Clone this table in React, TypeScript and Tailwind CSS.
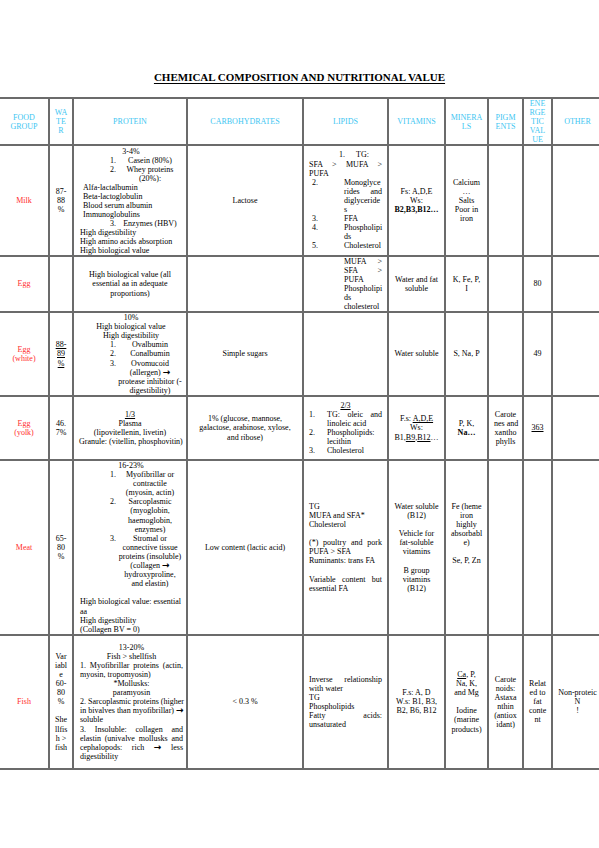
import type { ReactNode } from "react";

const cell = "border-2 border-[#6b6b6b] px-[5px] py-0 align-middle";
const head = "border-2 border-[#6b6b6b] px-0 py-0 text-center align-middle leading-[9px] text-[#3ec6f2]";
const food = `${cell} text-center text-[#ff2d2d]`;

function J({ children }: { children: ReactNode }) {
  return <div className="text-justify [text-align-last:justify]">{children}</div>;
}

function Arrow() {
  return <span className="font-['DejaVu_Sans',sans-serif] text-[9px] font-bold leading-[8px]">→</span>;
}

function Item({ n, children }: { n: string; children: ReactNode }) {
  return (
    <div className="ml-[30px] flex">
      <span className="w-[8px] shrink-0">{n}</span>
      <div className="flex-1 text-center">{children}</div>
    </div>
  );
}

function Num({ n, w, children }: { n: string; w: string; children: ReactNode }) {
  return (
    <div className="flex">
      <span className={`${w} shrink-0`}>{n}</span>
      <div className="flex-1">{children}</div>
    </div>
  );
}

function Lines({ items }: { items: ReactNode[] }) {
  return (
    <div className="text-center">
      {items.map((t, i) => (
        <div key={i}>{t === "" ? "\u00a0" : t}</div>
      ))}
    </div>
  );
}

export default function App() {
  return (
    <div className="min-h-[848px] w-[599px] overflow-hidden whitespace-nowrap bg-white pt-[71px] font-['Liberation_Serif',serif] text-[8px] leading-[9.1px] text-black">
      <h1 className="text-center text-[11px] font-bold leading-[13px] underline underline-offset-2">
        CHEMICAL COMPOSITION AND NUTRITIONAL VALUE
      </h1>

      <table className="-ml-[2px] mt-[13px] w-[604px] table-fixed border-collapse">
        <colgroup>
          <col className="w-[50px]" />
          <col className="w-[24px]" />
          <col className="w-[114px]" />
          <col className="w-[116px]" />
          <col className="w-[85px]" />
          <col className="w-[57px]" />
          <col className="w-[43px]" />
          <col className="w-[35px]" />
          <col className="w-[29px]" />
          <col className="w-[51px]" />
        </colgroup>
        <tbody>
          <tr className="h-[45px]">
            <td className={head}><Lines items={["FOOD", "GROUP"]} /></td>
            <td className={head}><Lines items={["WA", "TE", "R"]} /></td>
            <td className={head}>PROTEIN</td>
            <td className={head}>CARBOHYDRATES</td>
            <td className={head}>LIPIDS</td>
            <td className={head}>VITAMINS</td>
            <td className={head}><Lines items={["MINERA", "LS"]} /></td>
            <td className={head}><Lines items={["PIGM", "ENTS"]} /></td>
            <td className={head}><Lines items={["ENE", "RGE", "TIC", "VAL", "UE"]} /></td>
            <td className={head}>OTHER</td>
          </tr>

          {/* Milk */}
          <tr className="h-[111px]">
            <td className={food}>Milk</td>
            <td className={`${cell} px-0`}><Lines items={["87-", "88", "%"]} /></td>
            <td className={`${cell} pl-[6px] pr-[4px] leading-[9px]`}>
              <div className="text-center">3-4%</div>
              <Item n="1.">Casein (80%)</Item>
              <Item n="2.">
                <div>Whey proteins</div>
                <div>(20%):</div>
              </Item>
              <div className="pl-[3px]">
                <div>Alfa-lactalbumin</div>
                <div>Beta-lactoglobulin</div>
                <div>Blood serum albumin</div>
                <div>Immunoglobulins</div>
              </div>
              <Item n="3.">Enzymes (HBV)</Item>
              <div>High digestibility</div>
              <div>High amino acids absorption</div>
              <div>High biological value</div>
            </td>
            <td className={`${cell} text-center`}>Lactose</td>
            <td className={cell}>
              <div className="pl-[30px]">
                1.<span className="ml-[11px]">TG:</span>
              </div>
              <J>SFA &gt; MUFA &gt;</J>
              <div>PUFA</div>
              <Num n="2." w="w-[35px] pl-[3px]">
                <div>Monoglyce</div>
                <J>rides and</J>
                <div>diglyceride</div>
                <div>s</div>
              </Num>
              <Num n="3." w="w-[35px] pl-[3px]">FFA</Num>
              <Num n="4." w="w-[35px] pl-[3px]">
                <div>Phospholipi</div>
                <div>ds</div>
              </Num>
              <Num n="5." w="w-[35px] pl-[3px]">Cholesterol</Num>
            </td>
            <td className={`${cell} px-[2px]`}>
              <Lines items={["Fs: A,D,E", "Ws:", <b key="b">B2,B3,B12…</b>]} />
            </td>
            <td className={`${cell} px-[2px]`}>
              <Lines items={["Calcium", "…", "Salts", "Poor in", "iron"]} />
            </td>
            <td className={cell}></td>
            <td className={cell}></td>
            <td className={cell}></td>
          </tr>

          {/* Egg */}
          <tr className="h-[55px]">
            <td className={food}>Egg</td>
            <td className={cell}></td>
            <td className={`${cell} text-center`}>
              <div>High biological value (all</div>
              <div>essential aa in adequate</div>
              <div>proportions)</div>
            </td>
            <td className={cell}></td>
            <td className={`${cell} leading-[9px]`}>
              <div className="pl-[35px]">
                <J>MUFA &gt;</J>
                <J>SFA &gt;</J>
                <div>PUFA</div>
                <div>Phospholipi</div>
                <div>ds</div>
                <div>cholesterol</div>
              </div>
            </td>
            <td className={`${cell} px-[2px]`}>
              <Lines items={["Water and fat", "soluble"]} />
            </td>
            <td className={`${cell} px-[2px]`}>
              <Lines items={["K, Fe, P,", "I"]} />
            </td>
            <td className={cell}></td>
            <td className={`${cell} px-0 text-center`}>80</td>
            <td className={cell}></td>
          </tr>

          {/* Egg white */}
          <tr className="h-[84px]">
            <td className={food}><Lines items={["Egg", "(white)"]} /></td>
            <td className={`${cell} px-0 underline`}><Lines items={["88-", "89", "%"]} /></td>
            <td className={`${cell} pl-[6px] pr-[4px]`}>
              <div className="text-center">10%</div>
              <div className="text-center">High biological value</div>
              <div className="text-center">High digestibility</div>
              <Item n="1.">Ovalbumin</Item>
              <Item n="2.">Conalbumin</Item>
              <Item n="3.">
                <div>Ovomucoid</div>
                <div>
                  (allergen) <Arrow />
                </div>
                <div>protease inhibitor (-</div>
                <div>digestibility)</div>
              </Item>
            </td>
            <td className={`${cell} text-center`}>Simple sugars</td>
            <td className={cell}></td>
            <td className={`${cell} px-[2px] text-center`}>Water soluble</td>
            <td className={`${cell} px-[2px] text-center`}>S, Na, P</td>
            <td className={cell}></td>
            <td className={`${cell} px-0 text-center`}>49</td>
            <td className={cell}></td>
          </tr>

          {/* Egg yolk */}
          <tr className="h-[64px]">
            <td className={food}><Lines items={["Egg", "(yolk)"]} /></td>
            <td className={`${cell} px-0`}><Lines items={["46.", "7%"]} /></td>
            <td className={`${cell} px-[3px]`}>
              <Lines
                items={[
                  <span key="u" className="underline">1/3</span>,
                  "Plasma",
                  "(lipovitellenin, livetin)",
                  "Granule: (vitellin, phosphovitin)",
                ]}
              />
            </td>
            <td className={`${cell} text-center`}>
              <div>1% (glucose, mannose,</div>
              <div>galactose, arabinose, xylose,</div>
              <div>and ribose)</div>
            </td>
            <td className={cell}>
              <div className="text-center underline">2/3</div>
              <Num n="1." w="w-[18px]">
                <J>TG: oleic and</J>
                <div>linoleic acid</div>
              </Num>
              <Num n="2." w="w-[18px]">
                <div>Phospholipids:</div>
                <div>lecithin</div>
              </Num>
              <Num n="3." w="w-[18px]">Cholesterol</Num>
            </td>
            <td className={`${cell} px-[2px]`}>
              <Lines
                items={[
                  <span key="a">
                    F.s: <span className="underline">A,D,E</span>
                  </span>,
                  "Ws:",
                  <span key="b">
                    B1,<span className="underline">B9</span>,<span className="underline">B12</span>…
                  </span>,
                ]}
              />
            </td>
            <td className={`${cell} px-[2px]`}>
              <Lines items={["P, K,", <b key="n">Na…</b>]} />
            </td>
            <td className={`${cell} px-0`}>
              <Lines items={["Carote", "nes and", "xantho", "phylls"]} />
            </td>
            <td className={`${cell} px-0 text-center underline`}>363</td>
            <td className={cell}></td>
          </tr>

          {/* Meat */}
          <tr className="h-[173px]">
            <td className={food}>Meat</td>
            <td className={`${cell} px-0`}><Lines items={["65-", "80", "%"]} /></td>
            <td className={`${cell} pl-[6px] pr-[4px]`}>
              <div className="text-center">16-23%</div>
              <Item n="1.">
                <div>Myofibrillar or</div>
                <div>contractile</div>
                <div>(myosin, actin)</div>
              </Item>
              <Item n="2.">
                <div>Sarcoplasmic</div>
                <div>(myoglobin,</div>
                <div>haemoglobin,</div>
                <div>enzymes)</div>
              </Item>
              <Item n="3.">
                <div>Stromal or</div>
                <div>connective tissue</div>
                <div>proteins (insoluble)</div>
                <div>
                  (collagen <Arrow />
                </div>
                <div>hydroxyproline,</div>
                <div>and elastin)</div>
              </Item>
              <div>&nbsp;</div>
              <div>High biological value: essential</div>
              <div>aa</div>
              <div>High digestibility</div>
              <div>(Collagen BV = 0)</div>
            </td>
            <td className={`${cell} text-center`}>Low content (lactic acid)</td>
            <td className={cell}>
              <div>TG</div>
              <div>MUFA and SFA*</div>
              <div>Cholesterol</div>
              <div>&nbsp;</div>
              <J>(*) poultry and pork</J>
              <div>PUFA &gt; SFA</div>
              <div>Ruminants: trans FA</div>
              <div>&nbsp;</div>
              <J>Variable content but</J>
              <div>essential FA</div>
            </td>
            <td className={`${cell} px-[2px]`}>
              <Lines
                items={[
                  "Water soluble",
                  "(B12)",
                  "",
                  "Vehicle for",
                  "fat-soluble",
                  "vitamins",
                  "",
                  "B group",
                  "vitamins",
                  "(B12)",
                ]}
              />
            </td>
            <td className={`${cell} px-[2px]`}>
              <Lines
                items={["Fe (heme", "iron", "highly", "absorbabl", "e)", "", "Se, P, Zn", "", "", ""]}
              />
            </td>
            <td className={cell}></td>
            <td className={cell}></td>
            <td className={cell}></td>
          </tr>

          {/* Fish */}
          <tr className="h-[134px]">
            <td className={food}>Fish</td>
            <td className={`${cell} px-0`}>
              <Lines
                items={["Var", "iabl", "e", "60-", "80", "%", "", "She", "llfis", "h >", "fish"]}
              />
            </td>
            <td className={`${cell} pl-[6px] pr-[3px]`}>
              <div className="text-center">13-20%</div>
              <div className="text-center">Fish &gt; shellfish</div>
              <J>1. Myofibrillar proteins (actin,</J>
              <div>myosin, tropomyosin)</div>
              <div className="text-center">*Mollusks:</div>
              <div className="text-center">paramyosin</div>
              <div>2. Sarcoplasmic proteins (higher</div>
              <J>
                in bivalves than myofibrillar) <Arrow />
              </J>
              <div>soluble</div>
              <J>3. Insoluble: collagen and</J>
              <J>elastin (univalve mollusks and</J>
              <J>
                cephalopods: rich <Arrow /> less
              </J>
              <div>digestibility</div>
            </td>
            <td className={`${cell} text-center`}>&lt; 0.3 %</td>
            <td className={cell}>
              <J>Inverse relationship</J>
              <div>with water</div>
              <div>TG</div>
              <div>Phospholipids</div>
              <J>Fatty acids:</J>
              <div>unsaturated</div>
            </td>
            <td className={`${cell} px-[2px]`}>
              <Lines items={["F.s: A, D", "W.s: B1, B3,", "B2, B6, B12"]} />
            </td>
            <td className={`${cell} px-[2px]`}>
              <Lines
                items={[
                  <span key="c">
                    <span className="underline">Ca</span>, P,
                  </span>,
                  "Na, K,",
                  "and Mg",
                  "",
                  "Iodine",
                  "(marine",
                  "products)",
                ]}
              />
            </td>
            <td className={`${cell} px-0`}>
              <Lines items={["Carote", "noids:", "Astaxa", "nthin", "(antiox", "idant)"]} />
            </td>
            <td className={`${cell} px-0`}>
              <Lines items={["Relat", "ed to", "fat", "conte", "nt"]} />
            </td>
            <td className={`${cell} px-0`}>
              <Lines items={["Non-proteic", "N", "!"]} />
            </td>
          </tr>
        </tbody>
      </table>
    </div>
  );
}
